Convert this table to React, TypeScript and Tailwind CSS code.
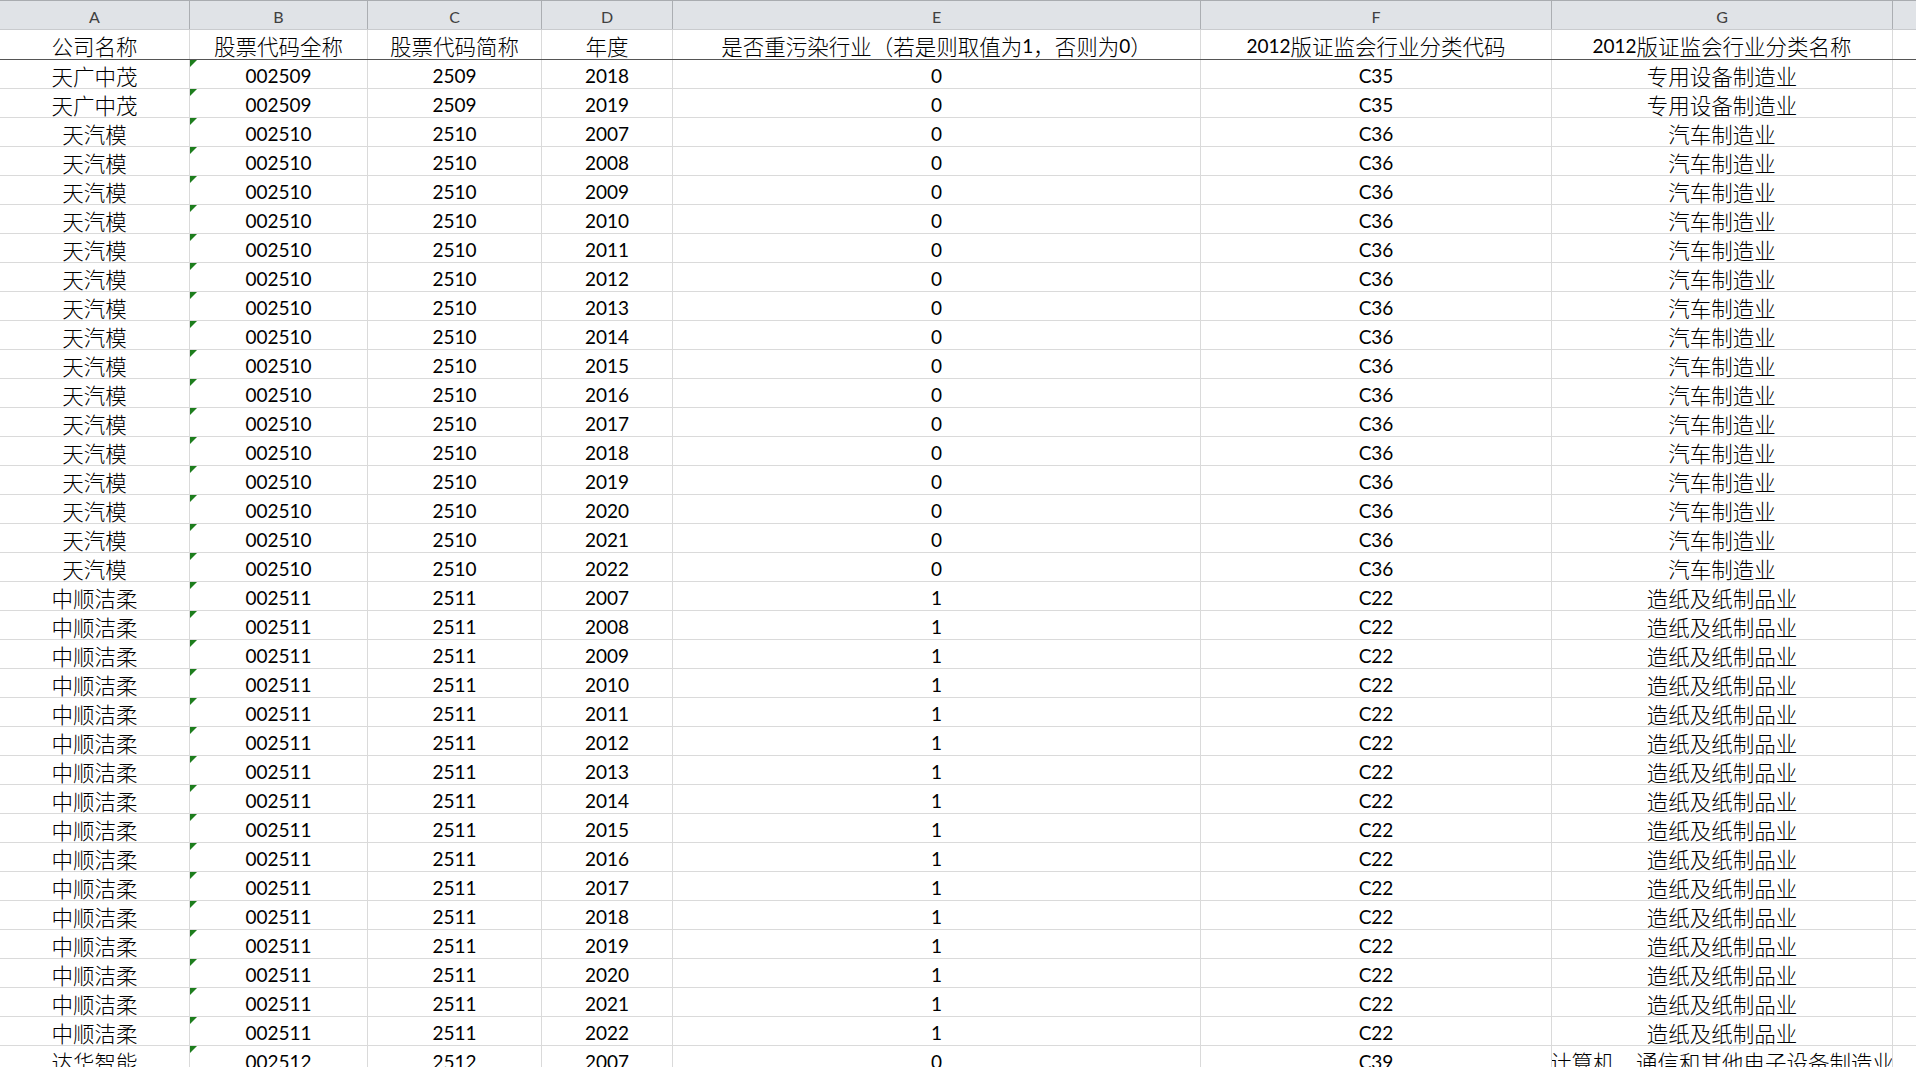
import React from 'react'

const widths = ['w-[190px]', 'w-[178px]', 'w-[174px]', 'w-[131px]', 'w-[528px]', 'w-[351px]', 'w-[341px]']
const letters = ['A', 'B', 'C', 'D', 'E', 'F', 'G']

const titles = [
  '公司名称',
  '股票代码全称',
  '股票代码简称',
  '年度',
  '是否重污染行业（若是则取值为1，否则为0）',
  '2012版证监会行业分类代码',
  '2012版证监会行业分类名称',
]

type Rec = [string, string, string, string, string, string, string]

const rows: Rec[] = []
rows.push(['天广中茂', '002509', '2509', '2018', '0', 'C35', '专用设备制造业'])
rows.push(['天广中茂', '002509', '2509', '2019', '0', 'C35', '专用设备制造业'])
for (let y = 2007; y <= 2022; y++) rows.push(['天汽模', '002510', '2510', String(y), '0', 'C36', '汽车制造业'])
for (let y = 2007; y <= 2022; y++) rows.push(['中顺洁柔', '002511', '2511', String(y), '1', 'C22', '造纸及纸制品业'])
rows.push(['达华智能', '002512', '2512', '2007', '0', 'C39', '计算机、通信和其他电子设备制造业'])

// ascii runs in a Calibri-ish latin face, the rest in the CJK face
function mix(text: string) {
  return text.split(/([\x00-\x7F]+)/).filter(Boolean).map((part, i) =>
    /^[\x00-\x7F]+$/.test(part)
      ? <span key={i} className="font-['Lato',sans-serif] text-[19px]">{part}</span>
      : <span key={i} className="font-['Noto_Sans_CJK_SC',sans-serif] text-[21.5px] font-light">{part}</span>
  )
}

function ColumnHeader() {
  return (
    <div className="flex h-[30px] shrink-0 border-t border-b border-t-[#a9acb0] border-b-[#c9cbce] bg-[#e0e3e7]">
      {letters.map((l, i) => (
        <div key={l} className={`${widths[i]} shrink-0 border-r border-[#abaeb2] flex items-center justify-center pt-[4px] font-['Lato',sans-serif] text-[16px] text-[#404040]`}>
          {l}
        </div>
      ))}
      <div className="flex-1" />
    </div>
  )
}

function TitleRow() {
  return (
    <div className="flex h-[30px] shrink-0 border-b border-[#555555] text-black">
      {titles.map((t, i) => (
        <div key={i} className={`${widths[i]} shrink-0 border-r border-[#dadada] flex items-center justify-center pt-[3px] whitespace-nowrap leading-[24px]`}>
          {mix(t)}
        </div>
      ))}
      <div className="flex-1" />
    </div>
  )
}

function DataRow({ rec }: { rec: Rec }) {
  return (
    <div className="flex h-[29px] shrink-0 border-b border-[#dadada] text-black">
      {rec.map((v, i) => (
        <div
          key={i}
          className={`${widths[i]} shrink-0 relative border-r border-[#dadada] flex items-center justify-center pt-[3px] whitespace-nowrap leading-[24px] ${v.length > 12 ? 'overflow-hidden' : ''}`}
        >
          {i === 1 && (
            <span className="absolute left-0 top-0 w-[7px] h-[7px] bg-[#1d7d1d] [clip-path:polygon(0_0,100%_0,0_100%)]" />
          )}
          {mix(v)}
        </div>
      ))}
      <div className="flex-1" />
    </div>
  )
}

export default function App() {
  return (
    <div className="h-[1067px] w-full overflow-hidden bg-white flex flex-col">
      <ColumnHeader />
      <TitleRow />
      {rows.map((r, i) => (
        <DataRow key={i} rec={r} />
      ))}
    </div>
  )
}
